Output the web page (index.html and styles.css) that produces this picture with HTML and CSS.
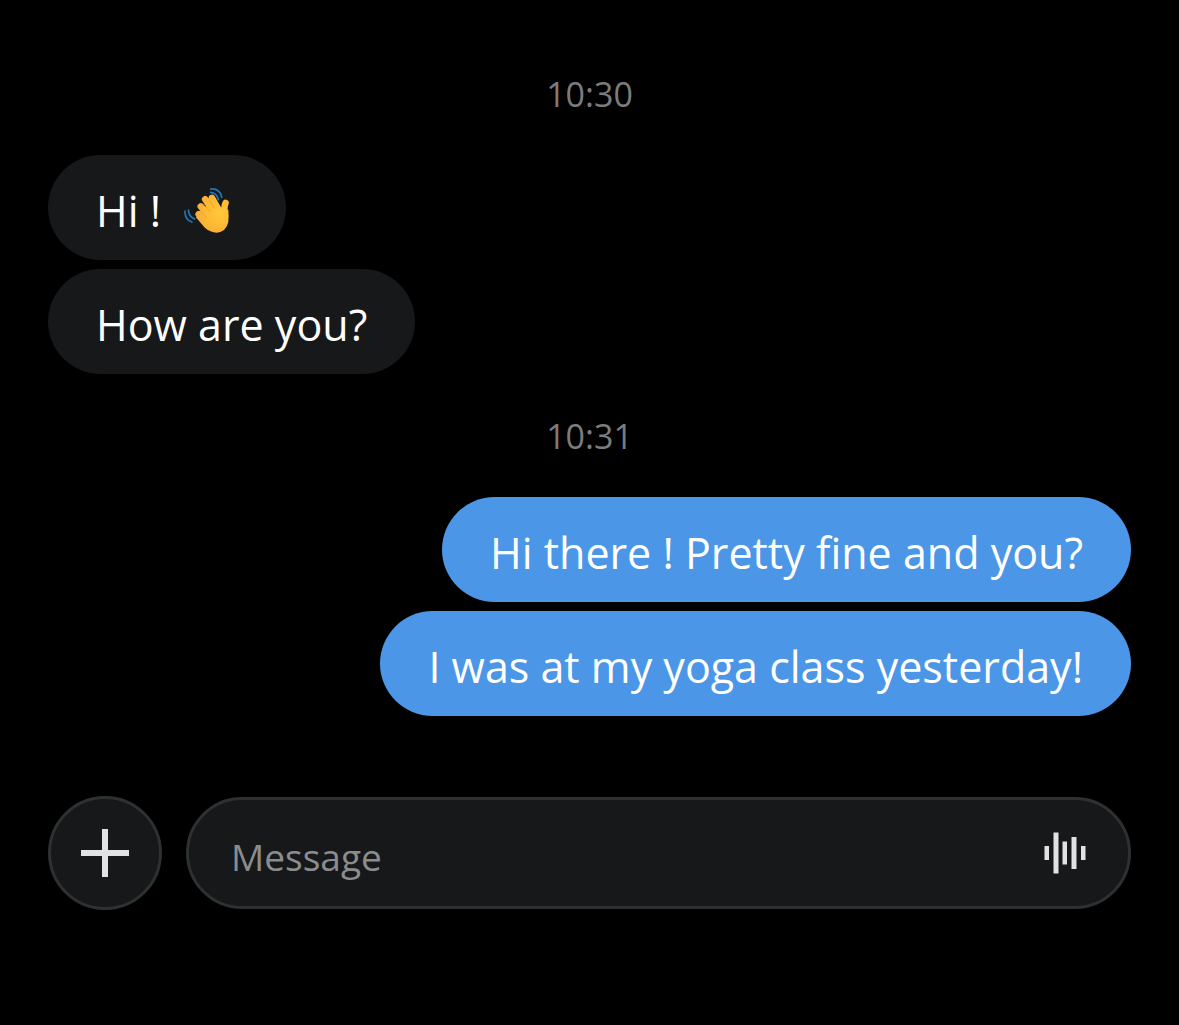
FILE: index.html
```html
<!DOCTYPE html>
<html lang="en">
<head>
<meta charset="utf-8">
<meta name="viewport" content="width=device-width, initial-scale=1">
<title>Chat</title>
<link rel="stylesheet" href="styles.css">
</head>
<body>
<main class="chat">
  <section class="group">
    <time class="time">10:30</time>
    <p class="bubble">Hi !
      <svg class="wave" viewBox="42 42 135 135" role="img" aria-label="Waving hand">
        <defs>
          <radialGradient id="skin" gradientUnits="userSpaceOnUse" cx="145" cy="115" r="75">
            <stop offset="0" stop-color="#ffc83c"/>
            <stop offset="0.6" stop-color="#fdb833"/>
            <stop offset="1" stop-color="#f8a544"/>
          </radialGradient>
        </defs>
        <g fill="none" stroke="#2277b8" stroke-width="5" stroke-linecap="round">
          <path d="M45 110Q44 134 65 142M55 107Q56 126 73 133M120 45Q147 43 153 69M120 55Q138 56 143 76"/>
        </g>
        <g fill="none" stroke="url(#skin)" stroke-width="19" stroke-linecap="round">
          <path d="M85 119L118 150M91 96L122 132M104 75L134 116M124 71L146 110M164 86Q158 98 162 124"/>
        </g>
        <path fill="url(#skin)" d="M92 106L112 92L132 86L144 104Q149 109 156 102L172 106Q174 125 172 142Q166 171 138 173Q119 173 103 159L77 128Z"/>
        <path fill="none" stroke="#e8952a" stroke-width="2" stroke-linecap="round" d="M91 110L107 127M100 89L118 111M116 78L131 101"/>
      </svg>
    </p>
    <p class="bubble">How are you?</p>
  </section>
  <section class="group">
    <time class="time">10:31</time>
    <p class="bubble sent">Hi there ! Pretty fine and you?</p>
    <p class="bubble sent">I was at my yoga class yesterday!</p>
  </section>
  <form class="composer">
    <button class="add" type="button" aria-label="Add attachment">
      <svg class="plus" viewBox="0 0 48 48" aria-hidden="true"><path d="M21 0h6v21h21v6H27v21h-6V27H0v-6h21z"/></svg>
    </button>
    <div class="field">
      <input class="message" type="text" placeholder="Message" aria-label="Message">
      <button class="voice" type="button" aria-label="Record voice message">
        <svg class="bars" viewBox="0 0 42 42" aria-hidden="true"><path d="M.5 14h4.500v14H.5zM9.500 .5h5v41h-5zM18.500 9.500h4.500v23h-4.500zM27.500 5h5v32h-5zM37 14h4.500v14H37z"/></svg>
      </button>
    </div>
  </form>
</main>
</body>
</html>
```
FILE: styles.css
```css
* {
  box-sizing: border-box;
}

body {
  margin: 0;
  background: #000;
  color: #fff;
  font-family: "Segoe UI", "Open Sans", "Noto Sans", sans-serif;
}

.chat {
  display: flex;
  flex-direction: column;
  padding: 70px 48px;
}

.group {
  display: flex;
  flex-direction: column;
  align-items: flex-start;
  gap: 9px;
  margin-bottom: 38px;
}

.time {
  align-self: center;
  margin-bottom: 28px;
  color: #7b7c7e;
  font-size: 34px;
  line-height: 48px;
}

.bubble {
  margin: 0;
  padding: 26px 48px 19px;
  border-radius: 53px;
  background: #17181a;
  font-size: 43px;
  line-height: 60px;
}

.sent {
  align-self: flex-end;
  background: #4b96e6;
}

.wave {
  width: 46px;
  height: 46px;
  margin: 0 8px 0 12px;
  vertical-align: -7px;
}

.composer {
  display: flex;
  align-items: center;
  gap: 24px;
  margin-top: 42px;
}

.add {
  display: grid;
  flex: none;
  place-items: center;
  width: 114px;
  height: 114px;
  padding: 0;
  border: 3px solid #2e3132;
  border-radius: 50%;
  background: #17181a;
}

.plus {
  width: 48px;
  height: 48px;
  fill: #e1e2e4;
}

.field {
  display: flex;
  flex: 1;
  align-items: center;
  min-width: 0;
  height: 112px;
  padding: 0 42px;
  border: 3px solid #2e3132;
  border-radius: 56px;
  background: #17181a;
}

.message {
  flex: 1;
  min-width: 0;
  padding: 6px 0 0;
  border: 0;
  outline: 0;
  background: none;
  color: #fff;
  font-family: inherit;
  font-size: 37px;
}

.message::placeholder {
  color: #8b8c8e;
  opacity: 1;
}

.voice {
  display: grid;
  padding: 0;
  border: 0;
  background: none;
}

.bars {
  width: 42px;
  height: 42px;
  fill: #e1e2e4;
}
```
